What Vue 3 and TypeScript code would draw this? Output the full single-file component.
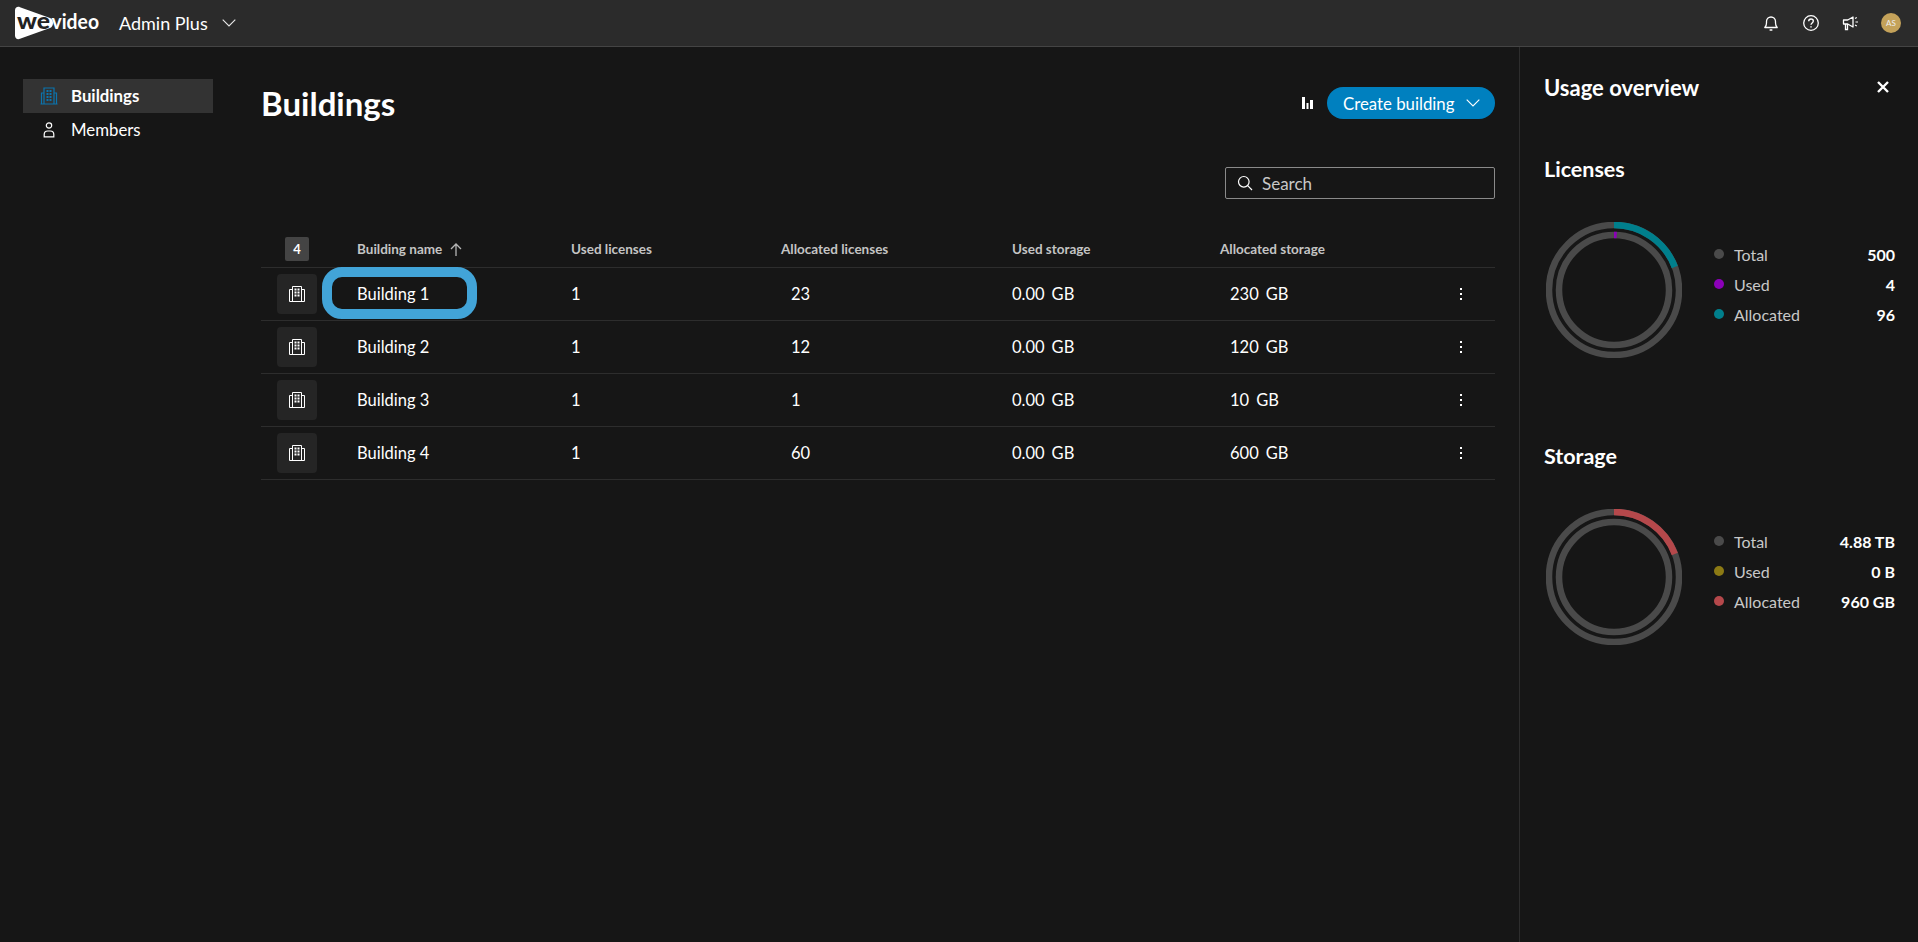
<script setup lang="ts">
interface BuildingRow {
  name: string
  used: number
  allocated: number
  storage: string
  allocatedStorage: number
}

interface LegendRow {
  label: string
  value: string
  color: string
}

interface UsageBlock {
  title: string
  arc: string
  inner: number
  innerColor: string
  legend: LegendRow[]
}

const rows: BuildingRow[] = [
  { name: 'Building 1', used: 1, allocated: 23, storage: '0.00', allocatedStorage: 230 },
  { name: 'Building 2', used: 1, allocated: 12, storage: '0.00', allocatedStorage: 120 },
  { name: 'Building 3', used: 1, allocated: 1, storage: '0.00', allocatedStorage: 10 },
  { name: 'Building 4', used: 1, allocated: 60, storage: '0.00', allocatedStorage: 600 },
]

const columns = ['Used licenses', 'Allocated licenses', 'Used storage', 'Allocated storage']

const usage: UsageBlock[] = [
  {
    title: 'Licenses',
    arc: '#007f8c',
    inner: 0.008,
    innerColor: '#8b00b8',
    legend: [
      { label: 'Total', value: '500', color: '#4a4a4a' },
      { label: 'Used', value: '4', color: '#8b00b8' },
      { label: 'Allocated', value: '96', color: '#007f8c' },
    ],
  },
  {
    title: 'Storage',
    arc: '#b5484b',
    inner: 0,
    innerColor: '#8c7a14',
    legend: [
      { label: 'Total', value: '4.88 TB', color: '#4a4a4a' },
      { label: 'Used', value: '0 B', color: '#8c7a14' },
      { label: 'Allocated', value: '960 GB', color: '#b5484b' },
    ],
  },
]

const OUTER_R = 65
const INNER_R = 55

function dash(r: number, part: number) {
  const len = 2 * Math.PI * r
  return `${len * part} ${len}`
}
</script>

<template>
  <div class="page">
    <header class="topbar">
      <svg class="logo" width="96" height="36" viewBox="0 0 96 36">
        <path d="M3 5.500C3 2.500 5.500 1.200 8 2.200L38 13c4 1.700 4 8.300 0 10L8 33.800C5.500 34.800 3 33.500 3 30.500Z" fill="#fff" />
        <text x="5" y="23.500" textLength="33" lengthAdjust="spacingAndGlyphs" class="logo-we">we</text>
        <text x="39.500" y="23.500" textLength="47.500" lengthAdjust="spacingAndGlyphs" class="logo-video">video</text>
      </svg>
      <span class="product">Admin Plus</span>
      <svg class="chevron" width="14" height="8" viewBox="0 0 14 8" fill="none">
        <path d="M.7.7 7 7 13.300.7" stroke="#e8e8e8" stroke-width="1.100" />
      </svg>
      <div class="top-icons">
        <svg width="18" height="18" viewBox="0 0 18 18" fill="none" stroke="#fff" stroke-width="1.300">
          <path d="M2.800 13.500c1.200-1.200 1.700-2.200 1.700-4.500V7.500a4.500 4.500 0 0 1 9 0V9c0 2.300.5 3.300 1.700 4.500Z" stroke-linejoin="round" />
          <path d="M8.200 16h1.600" stroke-linecap="round" stroke-width="1.600" />
        </svg>
        <svg width="18" height="18" viewBox="0 0 18 18" fill="none" stroke="#fff" stroke-width="1.300">
          <circle cx="9" cy="9" r="7.300" />
          <path d="M6.700 7.200C6.700 5.900 7.700 5 9 5s2.300.9 2.300 2.100c0 1.900-2.300 1.900-2.300 3.700" stroke-width="1.400" />
          <path d="M9 12.300v1.300" stroke-width="1.500" />
        </svg>
        <svg width="18" height="18" viewBox="0 0 18 18" fill="none" stroke="#fff" stroke-width="1.300">
          <path d="M1.500 6h4.200l5.300-3v10L5.700 10H1.500Z" stroke-linejoin="round" />
          <path d="M3.500 10v5.500h2V10" />
          <path d="M13 4.500l1.800-1M13.500 8H16M13 11l1.800 1" stroke-width="1.100" />
        </svg>
        <span class="avatar">AS</span>
      </div>
    </header>

    <div class="body">
      <nav class="sidebar">
        <a class="nav-item active">
          <svg width="18" height="18" viewBox="0 0 18 18" fill="none" stroke="#0b74ae" stroke-width="1.200">
            <path d="M4 17V1h10v16M4 6H1.500v11h15V6H14M.5 17h17" />
            <path d="M6.500 4h2M9.500 4h2M6.500 7h2M9.500 7h2M6.500 10h2M9.500 10h2M6.500 13h2M9.500 13h2" stroke-width="2" />
          </svg>
          Buildings
        </a>
        <a class="nav-item">
          <svg width="18" height="18" viewBox="0 0 18 18" fill="none" stroke="#fff" stroke-width="1.200">
            <circle cx="9" cy="4.500" r="2.700" />
            <path d="M4.200 15.800v-2.300a3.500 3.500 0 0 1 3.500-3.500h2.600a3.500 3.500 0 0 1 3.500 3.500v2.300Z" />
          </svg>
          Members
        </a>
      </nav>

      <main class="main">
        <div class="title-row">
          <h1>Buildings</h1>
          <svg class="bars" width="11" height="12" viewBox="0 0 11 12" fill="#fff">
            <rect x="0" y="0" width="3" height="12" />
            <rect x="4.500" y="6" width="2" height="6" />
            <rect x="8" y="3" width="3" height="9" />
          </svg>
          <button class="create">
            Create building
            <svg width="14" height="8" viewBox="0 0 14 8" fill="none">
              <path d="M.7.7 7 7 13.300.7" stroke="#fff" stroke-width="1.100" />
            </svg>
          </button>
        </div>

        <div class="search-row">
          <div class="search">
            <svg width="16" height="16" viewBox="0 0 16 16" fill="none" stroke="#fff" stroke-width="1.200">
              <circle cx="6.800" cy="6.800" r="5.300" />
              <path d="M10.700 10.700 15 15" />
            </svg>
            <span>Search</span>
          </div>
        </div>

        <div class="table">
          <div class="table-row head">
            <div><span class="count">4</span></div>
            <div class="sortable">
              Building name
              <svg width="12" height="13" viewBox="0 0 12 13" fill="none" stroke="#b5b5b5" stroke-width="1.300">
                <path d="M6 13V1M1 6l5-5 5 5" />
              </svg>
            </div>
            <div v-for="col in columns" :key="col">{{ col }}</div>
            <div></div>
          </div>

          <div v-for="(row, i) in rows" :key="row.name" class="table-row">
            <div>
              <span class="tile">
                <svg width="18" height="18" viewBox="0 0 18 18" fill="none" stroke="#fff" stroke-width="1">
                  <path d="M4.500 16.500V1.500h9v15M4.500 4.500h-3v12h15v-12h-3" />
                  <path d="M6.500 4.500h2M9.500 4.500h2M6.500 7.500h2M9.500 7.500h2M6.500 10.500h2M9.500 10.500h2" stroke-width="2" />
                </svg>
              </span>
            </div>
            <div class="name-cell">
              <span v-if="i === 0" class="highlight"></span>
              {{ row.name }}
            </div>
            <div>{{ row.used }}</div>
            <div class="offset">{{ row.allocated }}</div>
            <div class="size">
              <span>{{ row.storage }}</span><span>GB</span>
            </div>
            <div class="size alloc-size">
              <span>{{ row.allocatedStorage }}</span><span>GB</span>
            </div>
            <div class="more">
              <span></span><span></span><span></span>
            </div>
          </div>
        </div>
      </main>

      <aside class="panel">
        <div class="panel-head">
          <h2>Usage overview</h2>
          <svg width="12" height="12" viewBox="0 0 12 12" fill="none" stroke="#fff" stroke-width="2.400">
            <path d="M1 1l10 10M11 1 1 11" />
          </svg>
        </div>

        <section v-for="block in usage" :key="block.title" class="usage">
          <h3>{{ block.title }}</h3>
          <div class="usage-body">
            <svg class="donut" width="136" height="136" viewBox="0 0 136 136" fill="none" stroke-width="6.500">
              <circle cx="68" cy="68" :r="OUTER_R" stroke="#4a4a4a" />
              <circle cx="68" cy="68" :r="INNER_R" stroke="#4a4a4a" />
              <circle
                cx="68"
                cy="68"
                :r="OUTER_R"
                :stroke="block.arc"
                :stroke-dasharray="dash(OUTER_R, 0.192)"
                transform="rotate(-90 68 68)"
              />
              <circle
                v-if="block.inner"
                cx="68"
                cy="68"
                :r="INNER_R"
                :stroke="block.innerColor"
                :stroke-dasharray="dash(INNER_R, block.inner)"
                transform="rotate(-90 68 68)"
              />
            </svg>
            <ul class="legend">
              <li v-for="item in block.legend" :key="item.label">
                <i :style="{ background: item.color }"></i>
                <span>{{ item.label }}</span>
                <b>{{ item.value }}</b>
              </li>
            </ul>
          </div>
        </section>
      </aside>
    </div>
  </div>
</template>

<style>
html,
body {
  margin: 0;
  background: #161616;
}
</style>

<style scoped>
.page {
  height: 942px;
  display: flex;
  flex-direction: column;
  background: #161616;
  color: #fff;
  font-family: Lato, "Liberation Sans", sans-serif;
  overflow: hidden;
}

.topbar {
  height: 47px;
  box-sizing: border-box;
  flex-shrink: 0;
  display: flex;
  align-items: center;
  padding-left: 12px;
  background: #2b2b2b;
  border-bottom: 1px solid #444;
}

.logo {
  flex-shrink: 0;
}

.logo-we {
  font: 900 22px Lato, sans-serif;
  fill: #222;
}

.logo-video {
  font: 700 21px Lato, sans-serif;
  fill: #fff;
}

.product {
  margin-left: 11px;
  font-size: 18px;
}

.chevron {
  margin-left: 14px;
}

.top-icons {
  margin-left: auto;
  display: flex;
  align-items: center;
  gap: 22px;
  padding-right: 17px;
}

.top-icons svg {
  display: block;
}

.avatar {
  width: 20px;
  height: 20px;
  margin-left: -1px;
  border-radius: 50%;
  background: #c4a25a;
  color: #eee;
  font-size: 8px;
  display: flex;
  align-items: center;
  justify-content: center;
}

.body {
  flex: 1;
  display: flex;
  min-height: 0;
}

.sidebar {
  width: 238px;
  padding: 32px 0 0 23px;
  box-sizing: border-box;
  flex-shrink: 0;
}

.nav-item {
  width: 190px;
  height: 34px;
  display: flex;
  align-items: center;
  gap: 13px;
  padding: 0 0 1px 17px;
  box-sizing: border-box;
  font-size: 16.800px;
}

.nav-item.active {
  background: #333;
  font-weight: 700;
}

.main {
  flex: 1;
  min-width: 0;
  padding: 0 24px 0 23px;
}

.title-row {
  display: flex;
  align-items: center;
  height: 40px;
  margin-top: 36px;
}

h1 {
  margin: 0;
  font-size: 33px;
  font-weight: 700;
  margin-right: auto;
}

.bars {
  margin-right: 14px;
}

.create {
  width: 168px;
  height: 32px;
  border: 0;
  border-radius: 16px;
  background: #0080bf;
  color: #fff;
  font: 16.800px Lato, sans-serif;
  display: flex;
  align-items: center;
  gap: 12px;
  padding: 0 0 0 16px;
}

.search-row {
  display: flex;
  justify-content: flex-end;
  margin-top: 44px;
}

.search {
  width: 270px;
  height: 32px;
  box-sizing: border-box;
  border: 1px solid #8a8a8a;
  border-radius: 2px;
  display: flex;
  align-items: center;
  gap: 9px;
  padding-left: 11px;
  font-size: 17px;
  color: #c8c8c8;
}

.table {
  margin-top: 32px;
}

.table-row {
  display: grid;
  grid-template-columns: 96px 214px 210px 231px 208px 220px 1fr;
  align-items: center;
  height: 53px;
  box-sizing: border-box;
  border-bottom: 1px solid #2d2d2d;
  font-size: 16.500px;
}

.table-row.head {
  height: 37px;
  font-size: 13.500px;
  font-weight: 700;
  color: #c4c4c4;
}

.count {
  margin-left: 24px;
  width: 24px;
  height: 24px;
  border-radius: 2px;
  background: #444;
  color: #fff;
  font-size: 13px;
  display: flex;
  align-items: center;
  justify-content: center;
}

.sortable {
  display: flex;
  align-items: center;
  gap: 8px;
}

.tile {
  margin-left: 16px;
  width: 40px;
  height: 40px;
  border-radius: 4px;
  background: #252525;
  display: flex;
  align-items: center;
  justify-content: center;
}

.name-cell {
  position: relative;
  align-self: stretch;
  display: flex;
  align-items: center;
}

.highlight {
  position: absolute;
  left: -35px;
  top: -1px;
  width: 155px;
  height: 52px;
  box-sizing: border-box;
  border: 10px solid #42a4d8;
  border-radius: 20px;
}

.offset {
  padding-left: 10px;
}

.alloc-size {
  padding-left: 10px;
}

.size {
  display: flex;
  gap: 7px;
}

.more {
  display: flex;
  flex-direction: column;
  gap: 3px;
  padding-left: 20px;
}

.more span {
  width: 2px;
  height: 2px;
  background: #fff;
}

.panel {
  width: 399px;
  flex-shrink: 0;
  box-sizing: border-box;
  border-left: 1px solid #2d2d2d;
  padding: 0 23px 0 24px;
}

.panel-head {
  display: flex;
  align-items: center;
  justify-content: space-between;
  height: 24px;
  margin-top: 28px;
  padding-right: 6px;
}

h2,
h3 {
  margin: 0;
  font-size: 22px;
  font-weight: 700;
}

h3 {
  font-size: 21.500px;
  height: 24px;
  line-height: 24px;
}

.usage {
  margin-top: 58px;
  height: 287px;
}

.usage + .usage {
  margin-top: 0;
}

.usage-body {
  margin-top: 41px;
  display: flex;
  align-items: center;
}

.donut {
  flex-shrink: 0;
  margin-left: 2px;
}

.legend {
  list-style: none;
  margin: 0 0 12px 32px;
  padding: 0;
  flex: 1;
  font-size: 16px;
}

.legend li {
  height: 30px;
  display: flex;
  align-items: center;
}

.legend i {
  width: 10px;
  height: 10px;
  border-radius: 50%;
  margin-right: 10px;
}

.legend span {
  color: #c8c8c8;
}

.legend b {
  margin-left: auto;
}
</style>
